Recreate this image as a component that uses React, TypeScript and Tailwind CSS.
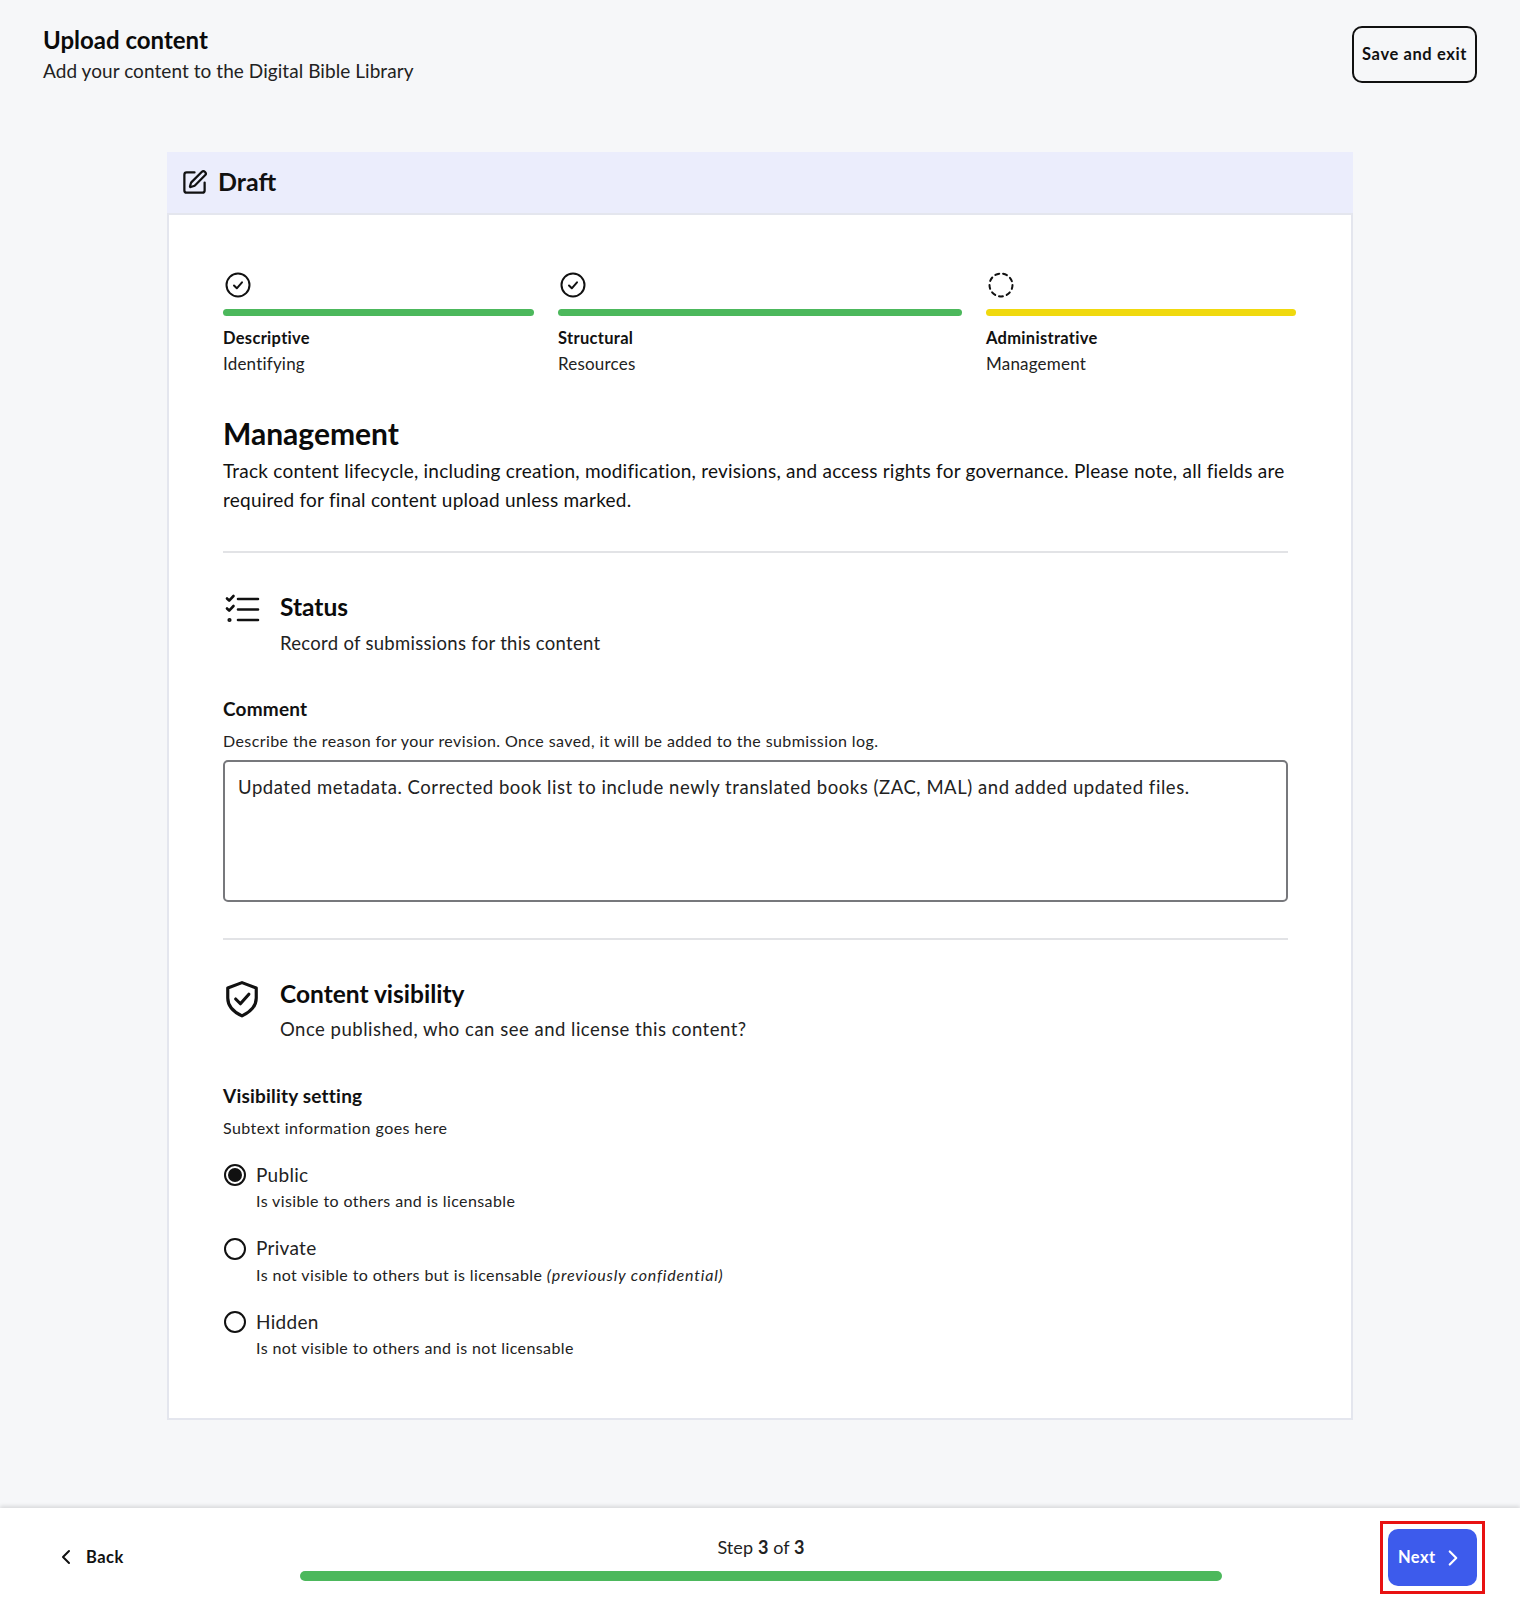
import { ChevronLeft, ChevronRight, SquarePen } from "lucide-react";

const font = "font-['Lato','Liberation_Sans',sans-serif]";

function StepIcon({ done }: { done: boolean }) {
    return (
        <svg width="26" height="26" viewBox="0 0 26 26" fill="none" stroke="#111" strokeWidth="2" strokeLinecap="round" strokeLinejoin="round">
            <circle cx="13" cy="13" r="11.5" strokeDasharray={done ? undefined : "4 4"} />
            {done && <path d="M9 13.5l2.8 2.8 5.2-6" />}
        </svg>
    );
}

function StatusIcon() {
    return (
        <svg width="36" height="30" viewBox="0 0 36 30" fill="none" stroke="#111" strokeWidth="2.6" strokeLinecap="round" strokeLinejoin="round" className="shrink-0">
            <path d="M3 4.5l2.2 2.2L9.5 2" />
            <path d="M3 14.5l2.2 2.2L9.5 12" />
            <path d="M14 5h20M14 15.500h20M14 26h20" />
            <circle cx="5.5" cy="26" r="0.8" fill="#111" />
        </svg>
    );
}

function ShieldIcon() {
    return (
        <svg width="38" height="38" viewBox="0 0 36 36" fill="none" stroke="#111" strokeWidth="3" strokeLinecap="round" strokeLinejoin="round" className="shrink-0">
            <path d="M18 2.5l13.5 5v9.5c0 8-6 13.5-13.5 17C10.5 30.500 4.5 25 4.5 17V7.500z" />
            <path d="M12 18l4.500 4.500L24.500 13.500" />
        </svg>
    );
}

function Step({ width, color, done, title, sub }: { width: string; color: string; done: boolean; title: string; sub: string }) {
    return (
        <div className={width}>
            <div className="h-[26px] pl-[2px]">
                <StepIcon done={done} />
            </div>
            <div className={`mt-[11px] h-[7px] rounded-full ${color}`} />
            <div className="mt-[12px] text-[16.5px] leading-[20px] font-bold text-[#111] tracking-[0.3px]">{title}</div>
            <div className="mt-[6px] text-[17px] leading-[20px] font-normal text-[#222] tracking-[0.2px]">{sub}</div>
        </div>
    );
}

function Radio({ checked, label, children }: { checked?: boolean; label: string; children: React.ReactNode }) {
    return (
        <div className="h-[73.5px]">
            <div className="flex items-center gap-[10px] h-[24px] pl-[1px]">
                <span className="w-[22px] h-[22px] rounded-full border-2 border-[#111] flex items-center justify-center shrink-0">
                    {checked && <span className="w-[14px] h-[14px] rounded-full bg-[#111]" />}
                </span>
                <span className="text-[19px] font-normal text-[#222] tracking-[0.3px]">{label}</span>
            </div>
            <div className="mt-[4px] pl-[33px] text-[16px] leading-[20px] font-normal text-[#222] tracking-[0.4px]">{children}</div>
        </div>
    );
}

export default function App() {
    return (
        <div className={`${font} w-[1520px] h-[1600px] bg-[#f6f7f9] flex flex-col overflow-hidden`}>
            <header className="h-[152px] shrink-0 flex justify-between items-start px-[43px] pt-[26px]">
                <div>
                    <div className="text-[24px] leading-[28px] font-bold text-[#0b0b0b]">Upload content</div>
                    <div className="mt-[3px] text-[19px] leading-[28px] font-normal text-[#222] tracking-[0.06px]">Add your content to the Digital Bible Library</div>
                </div>
                <button className="w-[125px] h-[57px] rounded-[10px] border-2 border-[#111] text-[16.5px] font-bold text-[#111] tracking-[0.6px]">Save and exit</button>
            </header>

            <main className="ml-[167px] w-[1186px] shrink-0">
                <div className="h-[63px] bg-[#ebedfc] border-b-2 border-[#e4e6ee] flex items-center pl-[14px] gap-[10px]">
                    <SquarePen size={27} strokeWidth={2} className="text-[#111]" />
                    <span className="text-[25px] font-bold text-[#111] pb-[2px]">Draft</span>
                </div>
                <div className="h-[1205px] bg-white border-x-2 border-b-2 border-[#e4e6ee] pl-[54px] pr-[63px] pt-[57px]">
                    <div className="flex gap-[24px] w-[1073px]">
                        <Step width="w-[311px]" color="bg-[#4cb85c]" done title="Descriptive" sub="Identifying" />
                        <Step width="w-[404px]" color="bg-[#4cb85c]" done title="Structural" sub="Resources" />
                        <Step width="w-[310px]" color="bg-[#f0d90e]" done={false} title="Administrative" sub="Management" />
                    </div>

                    <h2 className="mt-[41px] text-[30px] leading-[36px] font-bold text-[#0b0b0b]">Management</h2>
                    <p className="mt-[6px] text-[19px] leading-[28.5px] font-normal text-[#111] tracking-[0.23px]">
                        Track content lifecycle, including creation, modification, revisions, and access rights for governance. Please note, all fields are required for final content upload unless marked.
                    </p>
                    <div className="mt-[37px] h-[2px] bg-[#e2e3e6]" />

                    <div className="mt-[39px] flex gap-[21px]">
                        <div className="w-[36px] shrink-0 pl-[1px] pt-[2px]">
                            <StatusIcon />
                        </div>
                        <div>
                            <div className="text-[24.5px] leading-[30px] font-bold text-[#0b0b0b]">Status</div>
                            <div className="mt-[7px] text-[18.5px] leading-[28px] font-normal text-[#222] tracking-[0.29px]">Record of submissions for this content</div>
                        </div>
                    </div>

                    <div className="mt-[40px] text-[19px] leading-[24px] font-bold text-[#111] tracking-[0.2px]">Comment</div>
                    <div className="mt-[10px] text-[16px] leading-[20px] font-normal text-[#222] tracking-[0.41px]">Describe the reason for your revision. Once saved, it will be added to the submission log.</div>
                    <div className="mt-[9px] h-[142px] rounded-[5px] border-2 border-[#77787c] px-[13px] py-[13px] text-[18.5px] leading-[24px] font-normal text-[#222] tracking-[0.55px]">
                        Updated metadata. Corrected book list to include newly translated books (ZAC, MAL) and added updated files.
                    </div>
                    <div className="mt-[36px] h-[2px] bg-[#e2e3e6]" />

                    <div className="mt-[39px] flex gap-[21px]">
                        <div className="w-[36px] shrink-0 pt-[1px]">
                            <ShieldIcon />
                        </div>
                        <div>
                            <div className="text-[24.5px] leading-[30px] font-bold text-[#0b0b0b]">Content visibility</div>
                            <div className="mt-[6px] text-[18.5px] leading-[28px] font-normal text-[#222] tracking-[0.5px]">Once published, who can see and license this content?</div>
                        </div>
                    </div>

                    <div className="mt-[41px] text-[19px] leading-[24px] font-bold text-[#111] tracking-[0.2px]">Visibility setting</div>
                    <div className="mt-[10px] text-[16px] leading-[20px] font-normal text-[#222] tracking-[0.44px]">Subtext information goes here</div>
                    <div className="mt-[25px]">
                        <Radio checked label="Public">Is visible to others and is licensable</Radio>
                        <Radio label="Private">Is not visible to others but is licensable <em className="tracking-[0.8px]">(previously confidential)</em></Radio>
                        <Radio label="Hidden">Is not visible to others and is not licensable</Radio>
                    </div>
                </div>
            </main>

            <footer className="mt-[88px] h-[92px] shrink-0 bg-white shadow-[0_-2px_4px_rgba(0,0,0,0.12)] flex items-start pl-[54px]">
                <button className="mt-[37px] w-[246px] flex items-center gap-[8px] text-[16.5px] font-bold text-[#111] tracking-[0.5px]">
                    <ChevronLeft size={24} strokeWidth={2} />
                    Back
                </button>
                <div className="mt-[27px] w-[922px] shrink-0 flex flex-col items-center">
                    <div className="text-[18px] leading-[24px] font-normal text-[#222] tracking-[0.1px]">Step <b className="font-bold">3</b> of <b className="font-bold">3</b></div>
                    <div className="mt-[12px] h-[10px] w-full rounded-full bg-[#4cb85c]" />
                </div>
                <div className="mt-[13px] ml-[158px] shrink-0 border-[3px] border-[#e81212] p-[5px]">
                    <button className="w-[89px] h-[57px] rounded-[10px] bg-[#3d5bec] flex items-center pl-[10px] gap-[4px] text-[16.5px] font-bold text-white tracking-[0.4px]">
                        Next
                        <ChevronRight size={26} strokeWidth={2} />
                    </button>
                </div>
            </footer>
        </div>
    );
}
